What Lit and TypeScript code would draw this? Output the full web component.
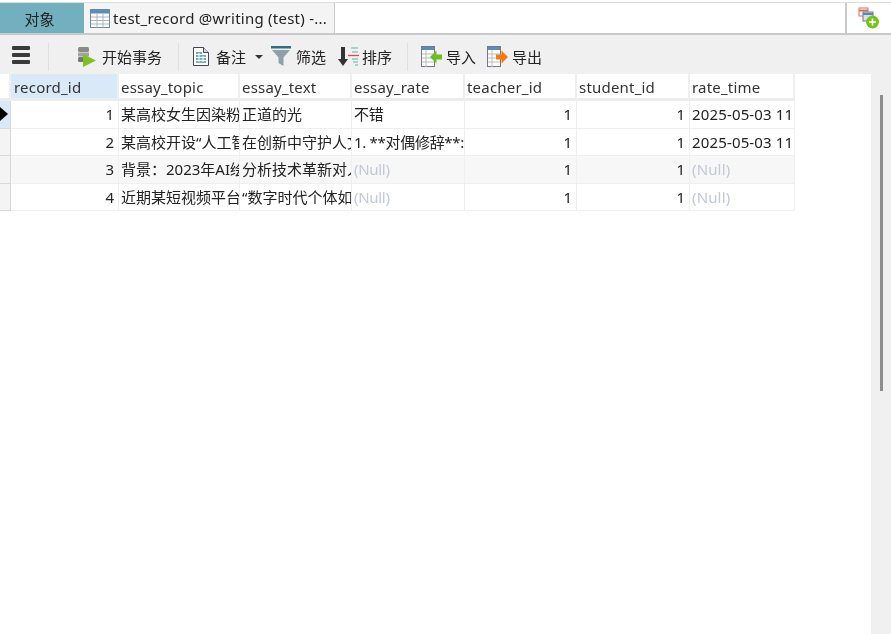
import { LitElement, html, css, svg } from "lit";
import { customElement } from "lit/decorators.js";

const columns = [
  { name: "record_id", width: 108, right: true, active: true, cls: "" },
  { name: "essay_topic", width: 121, cls: "" },
  { name: "essay_text", width: 112, cls: "" },
  { name: "essay_rate", width: 113, cls: "tight" },
  { name: "teacher_id", width: 112, right: true, cls: "" },
  { name: "student_id", width: 113, right: true, cls: "" },
  { name: "rate_time", width: 105, cls: "wide" },
];
const rows: (string | null)[][] = [
  ["1", "某高校女生因染粉色头发", "正道的光", "不错", "1", "1", "2025-05-03 11:20:15"],
  ["2", "某高校开设“人工智能", "在创新中守护人文精神", "1. **对偶修辞**:", "1", "1", "2025-05-03 11:24:40"],
  ["3", "背景：2023年AI绘画", "分析技术革新对人文", null, "1", "1", null],
  ["4", "近期某短视频平台", "“数字时代个体如何", null, "1", "1", null],
];

const icons = {
  table: svg`<svg width="20" height="19" viewBox="0 0 20 19"><rect x=".5" y=".5" width="19" height="18" fill="#fff" stroke="#6b8aa8"/><rect x="1" y="1" width="18" height="3.500" fill="#5b8cc0"/><path d="M1 8h18M1 11.500h18M1 15h18M7 4.500v14M13 4.500v14" stroke="#a9b4c0"/></svg>`,
  begin: svg`<svg width="20" height="20" viewBox="0 0 20 20"><rect x="1" y="0" width="11" height="5" rx="1.500" fill="#8a8a8a"/><rect x="1" y="5.500" width="11" height="4" fill="#a3a3a3"/><rect x="1" y="10" width="11" height="5" rx="1.500" fill="#777"/><path d="M6 7 19 13.500 6 20z" fill="#7cc41c"/></svg>`,
  note: svg`<svg width="18" height="21" viewBox="0 0 18 21"><path d="M1.500 1.500h10l5 5v13h-15z" fill="#fff" stroke="#445"/><path d="M11.500 1.500v5h5" fill="#dde" stroke="#445"/><path d="M4 7h6M4 10h10M4 13h10M4 16h10" stroke="#3f92bf" stroke-width="1.500"/><path d="M7 7v9M11 10v6" stroke="#fff"/></svg>`,
  filter: svg`<svg width="20" height="21" viewBox="0 0 20 21"><rect x="0" y="0" width="20" height="2.500" fill="#2d6f80"/><path d="M1 4h18l-6.500 7.500V20l-5-3v-5.500z" fill="#8fa1a6"/></svg>`,
  sort: svg`<svg width="21" height="21" viewBox="0 0 21 21"><path d="M3 1h4v12h3l-5 7-5-7h3z" fill="#333"/><path d="M13 2h7M14 6h6" stroke="#8fc9b0" stroke-width="1.500"/><path d="M10 9.500h11" stroke="#e8405a" stroke-width="1.300"/><path d="M14 13h6M15 16h5M17 19h3" stroke="#8fc9b0" stroke-width="1.500"/></svg>`,
  imp: svg`<svg width="21" height="21" viewBox="0 0 21 21"><rect x=".5" y=".5" width="13" height="20" fill="#fff" stroke="#778"/><rect x="1" y="1" width="12" height="3" fill="#5b8cc0"/><path d="M1 8h12M1 12h12M1 16h12M5 4v17" stroke="#bbb"/><path d="M9 11 15.500 4.500v4H21v5h-5.500v4z" fill="#6cc01e"/></svg>`,
  exp: svg`<svg width="21" height="21" viewBox="0 0 21 21"><rect x=".5" y=".5" width="13" height="20" fill="#fff" stroke="#778"/><rect x="1" y="1" width="12" height="3" fill="#5b8cc0"/><path d="M1 8h12M1 12h12M1 16h12M5 4v17" stroke="#bbb"/><path d="M21 11 14.500 4.500v4H9v5h5.500v4z" fill="#f57c0c"/></svg>`,
  add: svg`<svg width="22" height="22" viewBox="0 0 22 22"><rect x="1" y="1" width="9" height="8" fill="#fff" stroke="#d9705a"/><path d="M1 3.500h9" stroke="#d9705a" stroke-width="2"/><rect x="5" y="5" width="10" height="9" fill="#dde" stroke="#777"/><path d="M5 7h10" stroke="#4d86c6" stroke-width="2"/><circle cx="14.500" cy="15" r="6.500" fill="#78c31a"/><path d="M14.500 11.500v7M11 15h7" stroke="#fff" stroke-width="1.600"/></svg>`,
};

@customElement("app-root")
export class AppRoot extends LitElement {
  static styles = css`
    :host {
      display: flex;
      flex-direction: column;
      width: 891px;
      height: 634px;
      overflow: hidden;
      background: #fff;
      color: #222;
      font-family: "Noto Sans", "Noto Sans CJK SC", sans-serif;
      font-size: 15px;
      filter: blur(0.35px);
    }
    .tabs {
      display: flex;
      margin-top: 2px;
      border-top: 1px solid #dcdcdc;
      border-bottom: 2px solid #c9c9c9;
      box-sizing: border-box;
      height: 33px;
      background: #f0f0f0;
    }
    .tab-objects {
      width: 84px;
      background: #72b0bf;
      display: flex;
      align-items: center;
      justify-content: center;
      padding-right: 5px;
      box-sizing: border-box;
    }
    .tab-active {
      width: 250px;
      display: flex;
      align-items: center;
      gap: 3px;
      padding-left: 6px;
      box-sizing: border-box;
      background: #f4f4f4;
      white-space: nowrap;
      letter-spacing: 0.25px;
    }
    .tab-blank {
      flex: 1;
      background: #fff;
      border-left: 1px solid #c9c9c9;
      border-right: 2px solid #c9c9c9;
    }
    .tab-add {
      width: 44px;
      background: #fff;
      display: flex;
      padding: 4px 0 0 11px;
      box-sizing: border-box;
    }
    .toolbar {
      height: 39px;
      background: #f0f0f0;
      display: flex;
      align-items: center;
      box-sizing: border-box;
      padding: 4px 0 0 12px;
    }
    .menu {
      display: flex;
      flex-direction: column;
      gap: 3px;
      width: 18px;
      margin: -3px 18px 0 0;
    }
    .menu i {
      height: 4px;
      background: #3a3a3a;
      border-radius: 1px;
    }
    .sep {
      width: 1px;
      height: 28px;
      background: #dfdfdf;
    }
    .tool {
      display: flex;
      align-items: center;
      white-space: nowrap;
    }
    .begin { gap: 5px; margin: 0 16px 0 28px; }
    .note { gap: 6px; margin-left: 13px; }
    .caret {
      width: 0;
      height: 0;
      border: 4px solid transparent;
      border-top-color: #333;
      border-bottom: 0;
      margin: 0 8px 0 9px;
    }
    .filter { gap: 5px; margin-right: 12px; }
    .sort { gap: 3px; margin-right: 15px; }
    .imp { gap: 4px; margin: 0 11px 0 13px; }
    .exp { gap: 4px; }
    .main {
      flex: 1;
      display: flex;
      min-height: 0;
    }
    .grid-wrap { flex: 1; background: #fff; }
    .grid {
      display: grid;
      width: max-content;
    }
    .cell {
      box-sizing: border-box;
      height: 27.500px;
      line-height: 27px;
      padding: 0 2px;
      white-space: nowrap;
      overflow: hidden;
      border-right: 1px solid #efefef;
      border-bottom: 1px solid #efefef;
    }
    .head {
      height: 27px;
      line-height: 26px;
      border-bottom: 3px solid #ececec;
      border-right: 2px solid #efefef;
      color: #333;
      letter-spacing: 0.2px;
    }
    .head.active { background: #d9e9f8; padding-left: 3px; }
    .corner { padding: 0; }
    .rowhead {
      padding: 0;
      background: #f4f4f4;
      border-right: 1px solid #d9d9d9;
      border-bottom: 1px solid #d9d9d9;
      display: flex;
      align-items: center;
    }
    .rowhead.selected { background: #d9e9f8; }
    .marker {
      width: 0;
      height: 0;
      border: 7px solid transparent;
      border-left: 8px solid #000;
      border-right: 0;
    }
    .right { text-align: right; padding-right: 4px; }
    .tight { letter-spacing: -0.3px; }
    .wide { letter-spacing: 0.15px; }
    .null { color: #c2c8d6; }
    .alt { background: #f7f7f7; }
    .scroll {
      width: 20px;
      background: #f0f0f0;
      display: flex;
      justify-content: center;
    }
    .thumb {
      width: 3px;
      height: 296px;
      margin: 21px 0 0 1px;
      background: #8d8d8d;
    }
  `;

  render() {
    return html`
      <div class="tabs">
        <div class="tab-objects">对象</div>
        <div class="tab-active">${icons.table}<span>test_record @writing (test) -...</span></div>
        <div class="tab-blank"></div>
        <div class="tab-add">${icons.add}</div>
      </div>
      <div class="toolbar">
        <div class="menu"><i></i><i></i><i></i></div>
        <div class="sep"></div>
        <div class="tool begin">${icons.begin}<span>开始事务</span></div>
        <div class="sep"></div>
        <div class="tool note">${icons.note}<span>备注</span></div>
        <div class="caret"></div>
        <div class="tool filter">${icons.filter}<span>筛选</span></div>
        <div class="tool sort">${icons.sort}<span>排序</span></div>
        <div class="sep"></div>
        <div class="tool imp">${icons.imp}<span>导入</span></div>
        <div class="tool exp">${icons.exp}<span>导出</span></div>
      </div>
      <div class="main">
        <div class="grid-wrap">
          <div class="grid" style="grid-template-columns: 11px ${columns.map((c) => c.width + "px").join(" ")}">
            <div class="cell head corner"></div>
            ${columns.map((c) => html`<div class="cell head ${c.active ? "active" : ""}">${c.name}</div>`)}
            ${rows.map(
              (r, i) => html`
                <div class="cell rowhead ${i === 0 ? "selected" : ""}">${i === 0 ? html`<span class="marker"></span>` : ""}</div>
                ${r.map(
                  (v, j) => html`<div class="cell ${columns[j].cls} ${columns[j].right ? "right" : ""} ${v === null ? "null" : ""} ${i === 2 ? "alt" : ""}">${v ?? "(Null)"}</div>`
                )}
              `
            )}
          </div>
        </div>
        <div class="scroll"><div class="thumb"></div></div>
      </div>
    `;
  }
}
